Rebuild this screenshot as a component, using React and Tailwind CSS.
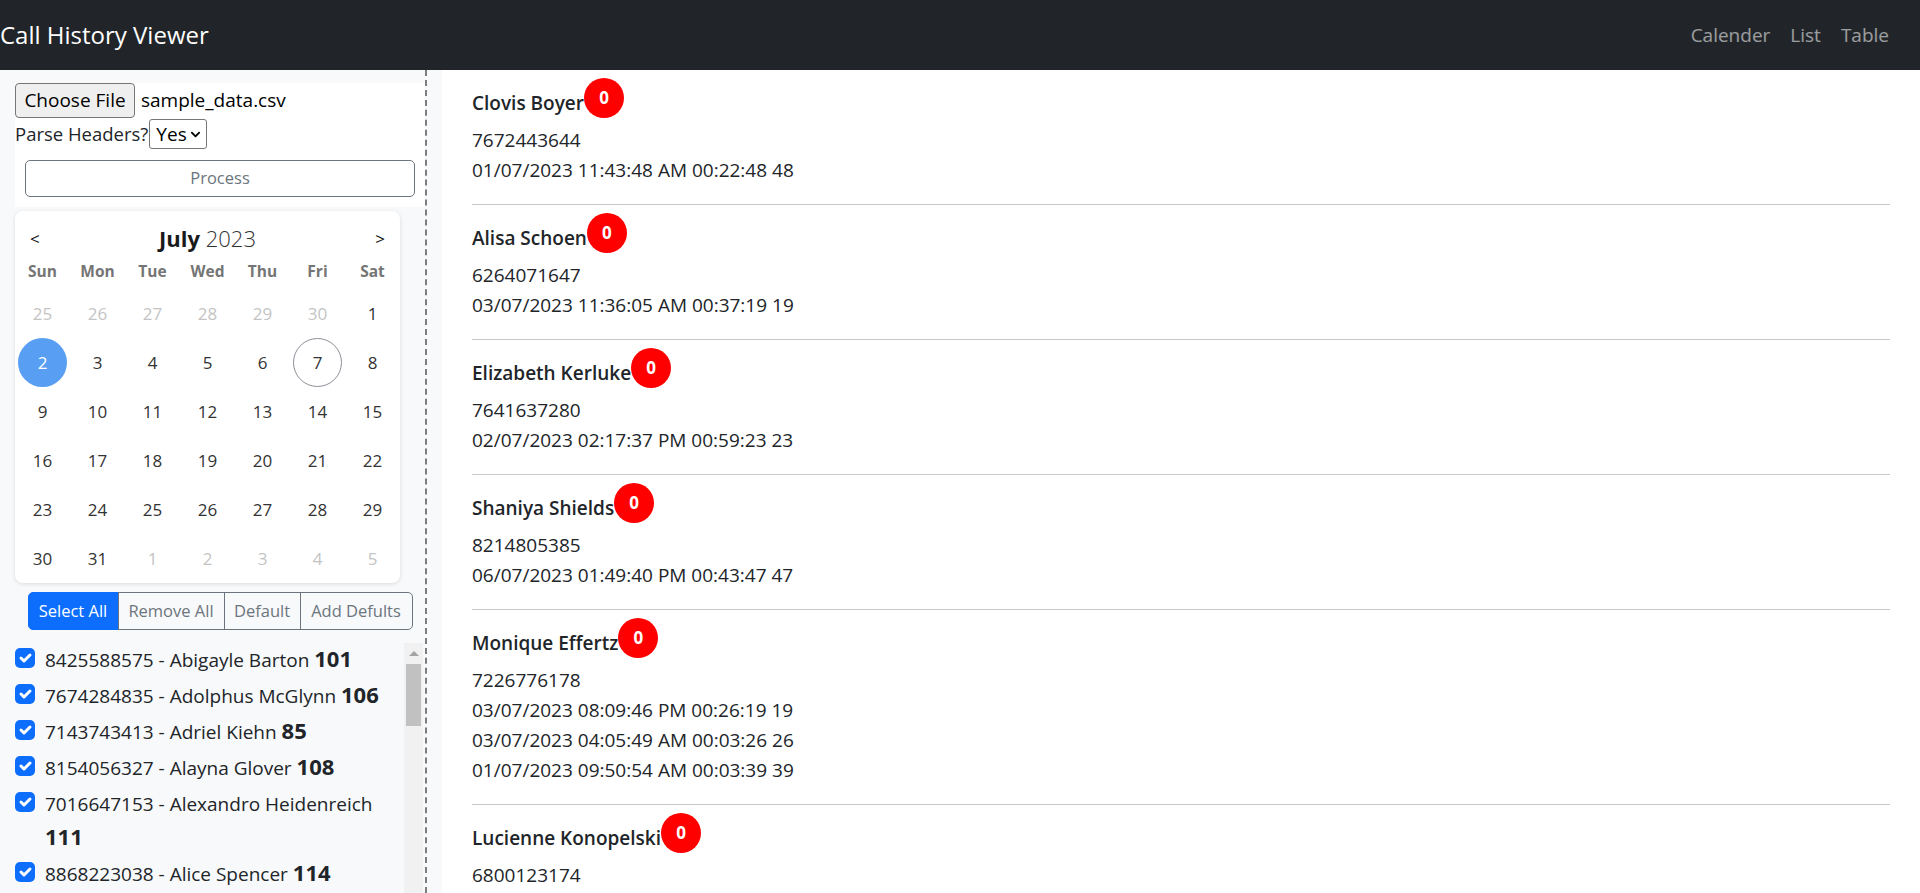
import React from "react";

const contacts = [
  ["8425588575", "Abigayle Barton", 101],
  ["7674284835", "Adolphus McGlynn", 106],
  ["7143743413", "Adriel Kiehn", 85],
  ["8154056327", "Alayna Glover", 108],
  ["7016647153", "Alexandro Heidenreich", 111],
  ["8868223038", "Alice Spencer", 114],
  ["6264071647", "Alisa Schoen", 97],
  ["7325519086", "Amara Rutherford", 92],
  ["8031264457", "Amelia Wisoky", 103],
  ["6917730248", "Anabel Hahn", 99],
  ["7781034562", "Angus Crist", 110],
  ["8247719903", "Antwan Lind", 88],
];

const calls = [
  {
    name: "Clovis Boyer",
    phone: "7672443644",
    lines: ["01/07/2023 11:43:48 AM 00:22:48 48"],
  },
  {
    name: "Alisa Schoen",
    phone: "6264071647",
    lines: ["03/07/2023 11:36:05 AM 00:37:19 19"],
  },
  {
    name: "Elizabeth Kerluke",
    phone: "7641637280",
    lines: ["02/07/2023 02:17:37 PM 00:59:23 23"],
  },
  {
    name: "Shaniya Shields",
    phone: "8214805385",
    lines: ["06/07/2023 01:49:40 PM 00:43:47 47"],
  },
  {
    name: "Monique Effertz",
    phone: "7226776178",
    lines: [
      "03/07/2023 08:09:46 PM 00:26:19 19",
      "03/07/2023 04:05:49 AM 00:03:26 26",
      "01/07/2023 09:50:54 AM 00:03:39 39",
    ],
  },
  {
    name: "Lucienne Konopelski",
    phone: "6800123174",
    lines: [],
  },
];

const weeks = [
  [[25, 1], [26, 1], [27, 1], [28, 1], [29, 1], [30, 1], [1, 0]],
  [[2, 0], [3, 0], [4, 0], [5, 0], [6, 0], [7, 0], [8, 0]],
  [[9, 0], [10, 0], [11, 0], [12, 0], [13, 0], [14, 0], [15, 0]],
  [[16, 0], [17, 0], [18, 0], [19, 0], [20, 0], [21, 0], [22, 0]],
  [[23, 0], [24, 0], [25, 0], [26, 0], [27, 0], [28, 0], [29, 0]],
  [[30, 0], [31, 0], [1, 1], [2, 1], [3, 1], [4, 1], [5, 1]],
];

function Calendar() {
  return (
    <div className="w-[385px] mt-[4px] bg-white rounded-[8px] shadow-[0_1px_4px_rgba(0,0,0,0.12)] pt-[12px]">
      <div className="h-[30px] flex items-center justify-between px-[15px] text-[#111]">
        <span className="text-[17px] leading-none">&lt;</span>
        <span className="text-[22px] leading-[30px]">
          <span className="font-bold text-[#1a1a1a]">July</span>{" "}
          <span className="font-light text-[#333]">2023</span>
        </span>
        <span className="text-[17px] leading-none">&gt;</span>
      </div>
      <div className="grid grid-cols-7 mt-[6px] h-[24px] items-center">
        {["Sun", "Mon", "Tue", "Wed", "Thu", "Fri", "Sat"].map((d) => (
          <div key={d} className="text-center text-[15.5px] font-bold text-[#757575] leading-[24px]">
            {d}
          </div>
        ))}
      </div>
      <div className="grid grid-cols-7 mt-[6px]">
        {weeks.flat().map(([n, faded], i) => {
          const selected = i === 7;
          const today = i === 12;
          return (
            <div key={i} className="h-[49px] flex items-center justify-center">
              <div
                className={
                  "w-[49px] h-[49px] rounded-full flex items-center justify-center text-[17px] " +
                  (selected
                    ? "bg-[#589ff4] text-white"
                    : today
                    ? "border border-[#8a8f96] text-[#333]"
                    : faded
                    ? "text-[#c4c4c4]"
                    : "text-[#333]")
                }
              >
                {n}
              </div>
            </div>
          );
        })}
      </div>
    </div>
  );
}

function Check() {
  return (
    <span className="mt-[5px] w-[20px] h-[20px] shrink-0 rounded-[5px] bg-[#0d6efd] flex items-center justify-center">
      <svg viewBox="0 0 20 20" className="w-[20px] h-[20px]">
        <path d="m6 10 3 3 6-6" fill="none" stroke="#fff" strokeWidth="3" strokeLinecap="round" strokeLinejoin="round" />
      </svg>
    </span>
  );
}

function Sidebar() {
  return (
    <div className="w-[442px] shrink-0 bg-[#f8f9fa] pl-[15px] pr-[15px] flex">
      <div className="w-[412px] border-r-2 border-dashed border-[#7d7d7d] pt-[13px] flex flex-col">
        <div className="bg-white pb-[10px]">
          <div className="flex items-center h-[35px]">
            <button className="h-[35px] w-[120px] bg-[#efefef] border border-[#767676] rounded-[4px] text-[19px] text-black">
              Choose File
            </button>
            <span className="ml-[6px] text-[19px] text-black">sample_data.csv</span>
          </div>
          <div className="flex items-center h-[31px] pt-[1px]">
            <span className="text-[18.5px] text-[#212529]">Parse Headers?</span>
            <div className="ml-[1px] w-[58px] h-[30px] border border-[#767676] rounded-[3px] flex items-center justify-between pl-[6px] pr-[5px] bg-white">
              <span className="text-[19px] text-black">Yes</span>
              <svg viewBox="0 0 12 12" className="w-[11px] h-[11px]">
                <path d="M2 4l4 4 4-4" fill="none" stroke="#000" strokeWidth="2" strokeLinecap="round" strokeLinejoin="round" />
              </svg>
            </div>
          </div>
          <button className="mt-[11px] mx-[10px] w-[390px] h-[37px] border border-[#6c757d] rounded-[5px] text-[16.5px] text-[#6c757d] bg-white">
            Process
          </button>
        </div>
        <Calendar />
        <div className="flex justify-center mt-[9px]">
          <div className="flex h-[38px] text-[16.5px]">
            <button className="w-[91px] bg-[#0d6efd] text-white border border-[#0d6efd] rounded-l-[5px]">Select All</button>
            <button className="w-[107px] text-[#6c757d] border border-[#6c757d] -ml-px">Remove All</button>
            <button className="w-[77px] text-[#6c757d] border border-[#6c757d] -ml-px">Default</button>
            <button className="w-[113px] text-[#6c757d] border border-[#6c757d] -ml-px rounded-r-[5px]">Add Defults</button>
          </div>
        </div>
        <div className="mt-[13px] mr-[2px] h-[300px] shrink-0 flex">
          <div className="flex-1 min-w-0 overflow-hidden">
            {contacts.map(([phone, name, count]) => (
              <label key={phone} className="flex items-start mb-[2px]">
                <Check />
                <span className="ml-[10px] text-[19px] leading-[34px] text-[#212529]">
                  {phone} - {name} <span className="font-bold text-[22px] leading-[20px]">{count}</span>
                </span>
              </label>
            ))}
          </div>
          <div className="w-[19px] shrink-0 bg-[#f1f1f1] flex flex-col items-center">
            <div className="h-[21px] flex items-center justify-center">
              <svg viewBox="0 0 10 5" className="w-[10px] h-[5px]">
                <path d="M0 5L5 0L10 5Z" fill="#a3a3a3" />
              </svg>
            </div>
            <div className="w-[15px] h-[62px] bg-[#c1c1c1]" />
          </div>
        </div>
      </div>
    </div>
  );
}

function CallItem({ item, first }) {
  return (
    <div>
      {!first && <hr className="mt-[19px] mb-[18px] border-0 border-t border-[#c8c9ca]" />}
      <div className="flex items-start">
        <span className="text-[19px] leading-[30px] font-semibold text-[#212529]">{item.name}</span>
        <span className="-mt-[10px] w-[40px] h-[40px] shrink-0 rounded-full bg-[#ff0000] text-white font-bold text-[17px] flex items-center justify-center">
          0
        </span>
      </div>
      <div className="mt-[7px] text-[19px] leading-[30px] text-[#212529]">{item.phone}</div>
      {item.lines.map((l) => (
        <div key={l} className="text-[19px] leading-[30px] text-[#212529]">
          {l}
        </div>
      ))}
    </div>
  );
}

export default function App() {
  return (
    <div className="h-screen overflow-hidden flex flex-col font-['Open_Sans',sans-serif]">
      <nav className="h-[70px] shrink-0 bg-[#212529] flex items-center justify-between pr-[21px]">
        <span className="text-[24px] text-white leading-none">Call History Viewer</span>
        <div className="flex text-[19px] text-white/55">
          <span className="px-[10px]">Calender</span>
          <span className="px-[10px]">List</span>
          <span className="px-[10px]">Table</span>
        </div>
      </nav>
      <div className="flex flex-1 min-h-0">
        <Sidebar />
        <main className="flex-1 bg-white px-[30px] pt-[18px] overflow-hidden">
          {calls.map((c, i) => (
            <CallItem key={c.name} item={c} first={i === 0} />
          ))}
        </main>
      </div>
    </div>
  );
}
